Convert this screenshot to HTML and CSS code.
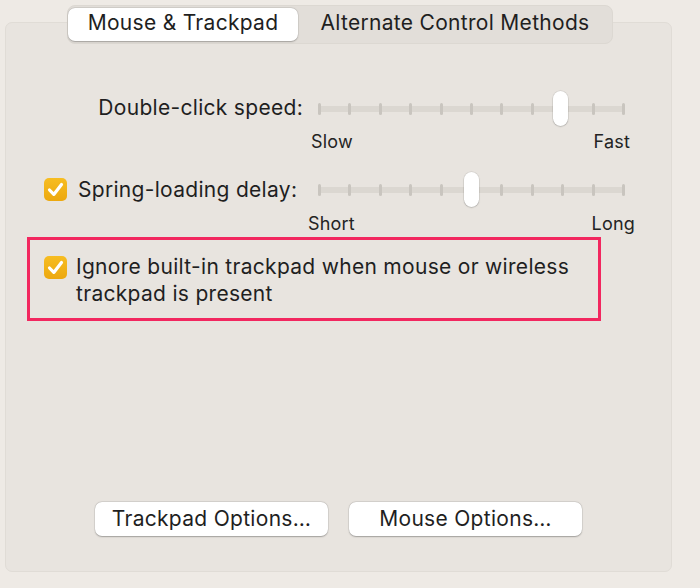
FILE: index.html
```html
<!DOCTYPE html>
<html>
<head>
<meta charset="utf-8">
<link rel="stylesheet" href="styles.css">
</head>
<body>
<div class="window">
  <div class="tabbar">
    <div class="tabs">
      <div class="tab tab-active">Mouse &amp; Trackpad</div>
      <div class="tab">Alternate Control Methods</div>
    </div>
  </div>
  <div class="panel">
    <div class="row row-first">
      <div class="label label-right">Double-click speed:</div>
      <div class="slider">
        <div class="track">
          <span class="tick"></span><span class="tick"></span><span class="tick"></span><span class="tick"></span><span class="tick"></span><span class="tick"></span><span class="tick"></span><span class="tick"></span><span class="tick"></span><span class="tick"></span><span class="tick"></span>
        </div>
        <div class="knob" style="left: 235px"></div>
      </div>
    </div>
    <div class="ends ends-first">
      <span>Slow</span><span>Fast</span>
    </div>
    <div class="row row-second">
      <div class="label label-check">
        <svg class="check" viewBox="0 0 23 23" width="23" height="23"><defs><linearGradient id="g1" x1="0" y1="0" x2="0" y2="1"><stop offset="0" stop-color="#f7bd22"/><stop offset="1" stop-color="#eca80f"/></linearGradient></defs><rect x="0" y="0" width="23" height="23" rx="5" fill="url(#g1)"/><path d="M5.5 12 L9.8 16.4 L17.5 6.5" fill="none" stroke="#fff" stroke-width="3.2" stroke-linecap="round" stroke-linejoin="round"/></svg>
        <span>Spring-loading delay:</span>
      </div>
      <div class="slider">
        <div class="track">
          <span class="tick"></span><span class="tick"></span><span class="tick"></span><span class="tick"></span><span class="tick"></span><span class="tick"></span><span class="tick"></span><span class="tick"></span><span class="tick"></span><span class="tick"></span><span class="tick"></span>
        </div>
        <div class="knob" style="left: 146px"></div>
      </div>
    </div>
    <div class="ends ends-second">
      <span>Short</span><span>Long</span>
    </div>
    <div class="highlight">
      <svg class="check" viewBox="0 0 23 23" width="23" height="23"><defs><linearGradient id="g2" x1="0" y1="0" x2="0" y2="1"><stop offset="0" stop-color="#f7bd22"/><stop offset="1" stop-color="#eca80f"/></linearGradient></defs><rect x="0" y="0" width="23" height="23" rx="5" fill="url(#g2)"/><path d="M5.5 12 L9.8 16.4 L17.5 6.5" fill="none" stroke="#fff" stroke-width="3.2" stroke-linecap="round" stroke-linejoin="round"/></svg>
      <div class="hl-text">Ignore built-in trackpad when mouse or wireless trackpad is present</div>
    </div>
    <div class="spacer"></div>
    <div class="buttons">
      <div class="btn">Trackpad Options…</div>
      <div class="btn">Mouse Options…</div>
    </div>
  </div>
</div>
</body>
</html>
```
FILE: styles.css
```css
html, body {
  margin: 0;
  padding: 0;
}
body {
  background: #eeeae5;
  width: 700px;
  height: 588px;
  font-family: Inter, "Noto Sans", sans-serif;
  color: #1f1f1f;
  overflow: hidden;
}
.window {
  padding: 5px 0 0 5px;
}
.tabbar {
  position: relative;
  z-index: 2;
  padding-left: 62px;
  display: flex;
}
.tabs {
  display: flex;
  width: 544px;
  height: 35px;
  padding: 2px 0 0 0;
  background: #e2ded9;
  border: 1px solid #dcd8d2;
  border-radius: 8px;
  box-sizing: content-box;
}
.tab {
  font-size: 21px;
  letter-spacing: 0.3px;
  height: 33px;
  line-height: 30px;
  text-align: center;
  flex: 1;
}
.tab-active {
  flex: 0 0 230px;
  background: #fff;
  border-radius: 7px;
  box-shadow: 0 0.5px 1.5px rgba(0,0,0,0.25), 0 0 0 0.5px rgba(0,0,0,0.08);
}
.panel {
  margin-top: -22px;
  width: 665px;
  height: 548px;
  background: #e8e4df;
  border: 1px solid #e0dcd6;
  border-radius: 7px;
  display: flex;
  flex-direction: column;
}
.row {
  display: flex;
  align-items: center;
  height: 36px;
}
.row-first {
  margin-top: 68px;
}
.label {
  font-size: 21px;
  letter-spacing: 0.3px;
  width: 297px;
  flex: 0 0 297px;
  padding-bottom: 3px;
  box-sizing: border-box;
}
.label-right {
  text-align: right;
}
.label-check {
  display: flex;
  align-items: center;
  padding-left: 38px;
  padding-bottom: 2px;
}
.label-check .check {
  margin-right: 11px;
}
.check {
  display: block;
  flex: 0 0 23px;
}
.slider {
  position: relative;
  margin-left: 15px;
  width: 307px;
  height: 36px;
}
.track {
  position: absolute;
  left: 0;
  right: 0;
  top: 15px;
  height: 6px;
  background: #dbd7d1;
  border-radius: 3px;
  display: flex;
  justify-content: space-between;
  align-items: center;
}
.tick {
  width: 3px;
  height: 12px;
  background: #c9c5bf;
  border-radius: 1.5px;
}
.knob {
  position: absolute;
  top: 0;
  width: 15px;
  height: 35px;
  background: #fff;
  border-radius: 8px;
  box-shadow: 0 0.5px 1.5px rgba(0,0,0,0.25), 0 0 0 0.5px rgba(0,0,0,0.08);
}
.ends {
  display: flex;
  justify-content: space-between;
  font-size: 18px;
  letter-spacing: 0.2px;
  line-height: 20px;
  color: #232323;
}
.ends-first {
  margin: 5px 0 0 305px;
  width: 319px;
}
.row-second {
  margin-top: 20px;
}
.ends-second {
  margin: 6px 0 0 302px;
  width: 327px;
}
.highlight {
  margin: 3px 0 0 21px;
  width: 554px;
  height: 78px;
  border: 3px solid #f2275f;
  display: flex;
  align-items: flex-start;
  padding-left: 14px;
  box-sizing: content-box;
}
.highlight .check {
  margin-top: 16px;
  margin-right: 9px;
}
.hl-text {
  font-size: 21px;
  letter-spacing: 0.3px;
  line-height: 27px;
  margin-top: 13px;
  width: 522px;
}
.spacer {
  flex: 1;
}
.buttons {
  display: flex;
  gap: 21px;
  padding-left: 89px;
  margin-bottom: 35px;
}
.btn {
  width: 233px;
  height: 34px;
  line-height: 34px;
  text-align: center;
  font-size: 21px;
  letter-spacing: 0.3px;
  background: #fff;
  border-radius: 7px;
  box-shadow: 0 0.5px 1.5px rgba(0,0,0,0.28), 0 0 0 0.5px rgba(0,0,0,0.08);
}
```
